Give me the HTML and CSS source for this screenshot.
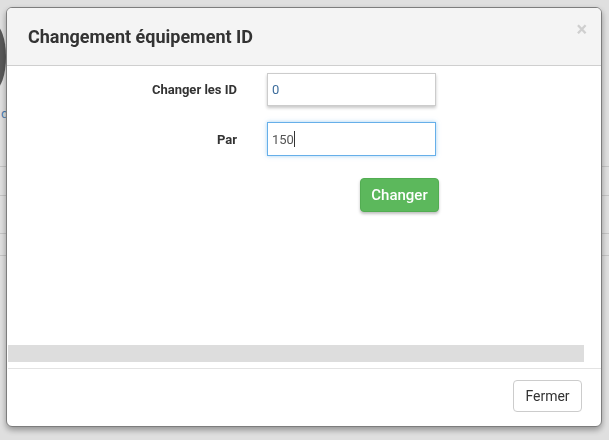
FILE: index.html
```html
<!DOCTYPE html>
<html lang="fr">
<head>
<meta charset="utf-8">
<title>Changement équipement ID</title>
<link rel="stylesheet" href="styles.css">
</head>
<body>
<div class="page">
  <div class="page-top"></div>
  <div class="page-logo"></div>
  <div class="page-link">d</div>
  <div class="page-rows">
    <div class="page-row row-a"></div>
    <div class="page-row row-b"></div>
    <div class="page-row row-c"></div>
    <div class="page-row row-d"></div>
  </div>
</div>
<div class="backdrop"></div>
<div class="modal">
  <div class="modal-header">
    <h4 class="modal-title">Changement équipement ID</h4>
    <span class="close">×</span>
  </div>
  <div class="modal-body">
    <div class="form">
      <label class="label">Changer les ID</label>
      <div class="field field-id" role="textbox">0</div>
      <label class="label">Par</label>
      <div class="field field-focus" role="textbox">150<span class="caret"></span></div>
    </div>
    <div class="actions">
      <button class="btn btn-success">Changer</button>
    </div>
    <div class="progress"></div>
  </div>
  <div class="modal-footer">
    <button class="btn btn-default">Fermer</button>
  </div>
</div>
</body>
</html>
```

FILE: styles.css
```css
html, body {
  margin: 0;
  padding: 0;
}
body {
  width: 609px;
  height: 440px;
  overflow: hidden;
  font-family: Roboto, "Liberation Sans", Arial, sans-serif;
  background: #e4e4e4;
  color: #333;
}
.page {
  height: 440px;
  display: flex;
  flex-direction: column;
}
.page-top {
  height: 24px;
}
.page-logo {
  width: 24px;
  height: 66px;
  margin-left: -18px;
  border-radius: 50%;
  background: #5a5a5a;
}
.page-link {
  color: #4a7fb5;
  font-size: 13px;
  line-height: 16px;
  margin-left: 1px;
  margin-top: 16px;
}
.page-rows {
  margin-top: 14px;
  display: flex;
  flex-direction: column;
}
.page-row {
  border-bottom: 1px solid #c9c9c9;
}
.row-a { height: 30px; }
.row-b { height: 28px; }
.row-c { height: 37px; }
.row-d { height: 21px; }
.backdrop {
  position: fixed;
  inset: 0;
  background: rgba(0, 0, 0, 0.02);
}
.modal {
  position: fixed;
  left: 6px;
  top: 7px;
  width: 596px;
  height: 420px;
  box-sizing: border-box;
  background: #fff;
  border: 1px solid #7d7d7d;
  border-radius: 6px;
  box-shadow: 0 3px 6px rgba(0, 0, 0, 0.35);
  display: flex;
  flex-direction: column;
  overflow: hidden;
}
.modal-header {
  height: 58px;
  box-sizing: border-box;
  background: #f4f4f4;
  border-bottom: 1px solid #cfcfcf;
  display: flex;
  align-items: center;
  justify-content: space-between;
  padding: 0 13px 0 21px;
  flex: none;
}
.modal-title {
  margin: 0;
  font-size: 18px;
  font-weight: 700;
  color: #333;
}
.close {
  font-size: 20px;
  font-weight: 700;
  color: #cfcfcf;
  line-height: 1;
  align-self: flex-start;
  margin-top: 11px;
  margin-right: 1px;
}
.modal-body {
  flex: 1;
  display: flex;
  flex-direction: column;
  padding: 7px 17px 6px 0;
}
.form {
  display: grid;
  grid-template-columns: 230px 169px;
  column-gap: 30px;
  row-gap: 16px;
  align-items: center;
}
.label {
  text-align: right;
  font-size: 13px;
  font-weight: 700;
  color: #333;
}
.field {
  height: 34px;
  box-sizing: border-box;
  border: 1px solid #ccc;
  background: #fff;
  font-size: 13px;
  padding: 0 4px;
  display: flex;
  align-items: center;
  color: #555;
}
.field-id {
  height: 33px;
  color: #3d6d9c;
  box-shadow: 0 2px 3px rgba(0, 0, 0, 0.22);
}
.field-focus {
  border-color: #66afe9;
  box-shadow: 0 0 4px rgba(102, 175, 233, 0.6);
}
.caret {
  width: 1px;
  height: 16px;
  background: #333;
}
.actions {
  display: flex;
  padding-left: 353px;
  margin-top: 22px;
}
.btn {
  font-family: Roboto, "Liberation Sans", Arial, sans-serif;
  font-size: 14px;
  border-radius: 4px;
  cursor: pointer;
}
.btn-success {
  width: 79px;
  height: 34px;
  background: #5cb85c;
  border: 1px solid #52ad52;
  color: #fff;
  font-size: 15px;
  font-weight: 500;
  box-shadow: 0 2px 3px rgba(0, 0, 0, 0.25);
}
.progress {
  margin-top: auto;
  height: 17px;
  background: #dddddd;
  margin-left: 1px;
}
.modal-footer {
  flex: none;
  border-top: 1px solid #e3e3e3;
  margin: 0 0 0 1px;
  display: flex;
  justify-content: flex-end;
  padding: 11px 19px 14px 0;
}
.btn-default {
  width: 69px;
  height: 32px;
  background: #fff;
  border: 1px solid #ccc;
  color: #333;
}
```
